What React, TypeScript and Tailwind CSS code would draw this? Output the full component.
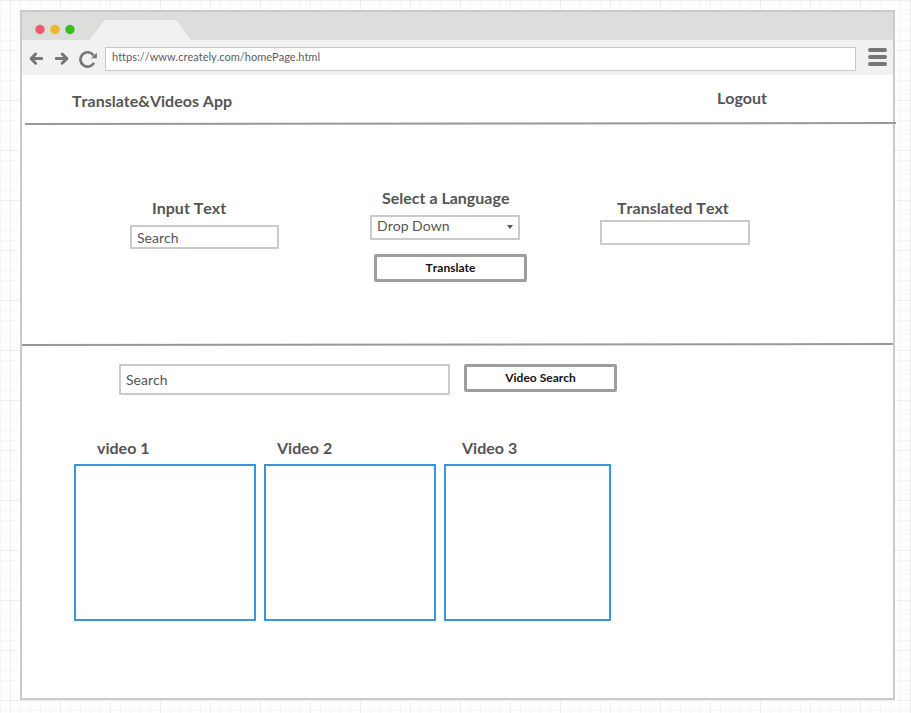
import type { ReactNode } from 'react';

function Rule({ className }: { className: string }) {
  return (
    <svg className={`block h-[3px] w-[871px] shrink-0 overflow-visible ${className}`} viewBox="0 0 871 3">
      <line x1="0" y1="2.1" x2="871" y2="1.1" stroke="#999" strokeWidth="2" />
    </svg>
  );
}

function Heading({ children, className }: { children: ReactNode; className: string }) {
  return <h2 className={`h-6 text-[16px] leading-6 font-bold whitespace-nowrap ${className}`}>{children}</h2>;
}

function Button({ children, className }: { children: ReactNode; className: string }) {
  return (
    <button
      className={`flex h-[28px] w-[153px] justify-center rounded-[2px] border-3 border-[#9e9e9e] bg-white text-[12px] leading-[22px] font-bold text-[#111] ${className}`}
    >
      {children}
    </button>
  );
}

function TabBar() {
  return (
    <div className="flex h-[28px] shrink-0 bg-[#dcdedb]">
      <svg className="mt-[12px] ml-[13px] h-[11px] w-[40px]" viewBox="0 0 40 11">
        <circle cx="5" cy="5.5" r="4.7" fill="#eb5b6b" />
        <circle cx="20" cy="5.5" r="4.7" fill="#ecb62e" />
        <circle cx="35" cy="5.5" r="4.7" fill="#38bd1c" />
      </svg>
      <svg className="mt-2 ml-[14px] h-5 w-[102px]" viewBox="0 0 102 20">
        <path d="M0.5 20 L15.5 0 H87 L102 20 Z" fill="#f1f1f1" />
      </svg>
    </div>
  );
}

function Toolbar() {
  return (
    <div className="flex h-[35px] shrink-0 bg-[#f1f1f1]">
      <svg className="mt-[10px] ml-[7px] h-[18px] w-[69px]" viewBox="0 0 69 18" fill="none" stroke="#777" strokeWidth="3">
        <path d="M6.6 4 L2.1 8.6 L6.6 13.2 M2.5 8.6 H12.7" strokeLinecap="round" strokeLinejoin="round" />
        <path d="M33.2 4 L37.9 8.6 L33.2 13.2 M37.5 8.6 H27.2" strokeLinecap="round" strokeLinejoin="round" />
        <path d="M64.6 5.4 A7.2 7.2 0 1 0 65 12.8" strokeWidth="2.7" />
        <path d="M67.9 2.7 V8.2 H61.9 Z" fill="#777" stroke="none" />
      </svg>
      <div className="mt-[7px] ml-[7px] h-[24px] w-[751px] border border-[#c8c8c8] bg-white pl-[6px] text-[11px] leading-[18px] text-[#5c5c5c]">
        https://www.creately.com/homePage.html
      </div>
      <div className="mt-2 ml-3 flex w-[19px] flex-col gap-[3px]">
        <span className="h-1 rounded-full bg-[#777]" />
        <span className="h-1 rounded-full bg-[#777]" />
        <span className="h-1 rounded-full bg-[#777]" />
      </div>
    </div>
  );
}

export default function App() {
  return (
    <div className="h-[713px] w-[911px] overflow-hidden bg-white bg-[linear-gradient(to_right,#eeeeee_1px,transparent_1px),linear-gradient(to_bottom,#eeeeee_1px,transparent_1px),linear-gradient(to_right,#f5f5f5_1px,transparent_1px),linear-gradient(to_bottom,#f5f5f5_1px,transparent_1px)] bg-[size:50px_50px,50px_50px,10px_10px,10px_10px] bg-[position:10px_0,0_0,0_0,0_0] pt-[10px] pl-5 font-['Lato',sans-serif] text-[#555] [font-kerning:none] [font-variant-ligatures:none]">
      <div className="flex h-[690px] w-[875px] flex-col border-2 border-[#cacaca] bg-white">
        <TabBar />
        <Toolbar />
        <header className="flex h-[47px] shrink-0 items-start justify-between pr-[126px] pl-[50px]">
          <Heading className="mt-[14px]">Translate&amp;Videos App</Heading>
          <Heading className="mt-[11px]">Logout</Heading>
        </header>
        <Rule className="ml-[3px]" />
        <section className="flex h-[218px] shrink-0 items-start pl-[108px]">
          <div className="mt-[71px] w-[240px]">
            <Heading className="pl-[22px]">Input Text</Heading>
            <div className="mt-[5px] h-[24px] w-[149px] border-2 border-[#cacaca] pl-[5px] text-[14px] leading-[22px]">
              Search
            </div>
          </div>
          <div className="mt-[61px] w-[230px]">
            <Heading className="pl-[12px]">Select a Language</Heading>
            <div className="mt-[5px] flex h-[25px] w-[150px] justify-between border-2 border-[#cacaca] pr-[5px] pl-[5px] text-[14px] leading-[18px]">
              Drop Down
              <svg className="mt-[8px] h-1 w-[6px]" viewBox="0 0 6 4">
                <path d="M0 0 H6 L3 4 Z" fill="#555" />
              </svg>
            </div>
            <Button className="mt-[14px] ml-1">Translate</Button>
          </div>
          <div className="mt-[71px]">
            <Heading className="pl-[17px]">Translated Text</Heading>
            <div className="h-[25px] w-[150px] border-2 border-[#cacaca]" />
          </div>
        </section>
        <Rule className="" />
        <section className="pt-[18px]">
          <div className="flex items-start gap-[14px] pl-[97px]">
            <div className="h-[31px] w-[331px] rounded-[1px] border-2 border-[#cacaca] pl-[5px] text-[14px] leading-[28px]">
              Search
            </div>
            <Button className="">Video Search</Button>
          </div>
          <div className="mt-[41px] flex gap-2 pl-[52px]">
            <div className="w-[182px]">
              <Heading className="pl-[23px]">video 1</Heading>
              <div className="mt-1 h-[157px] border-2 border-[#3498db]" />
            </div>
            <div className="w-[172px]">
              <Heading className="pl-[13px]">Video 2</Heading>
              <div className="mt-1 h-[157px] border-2 border-[#3498db]" />
            </div>
            <div className="w-[167px]">
              <Heading className="pl-[18px]">Video 3</Heading>
              <div className="mt-1 h-[157px] border-2 border-[#3498db]" />
            </div>
          </div>
        </section>
      </div>
    </div>
  );
}
